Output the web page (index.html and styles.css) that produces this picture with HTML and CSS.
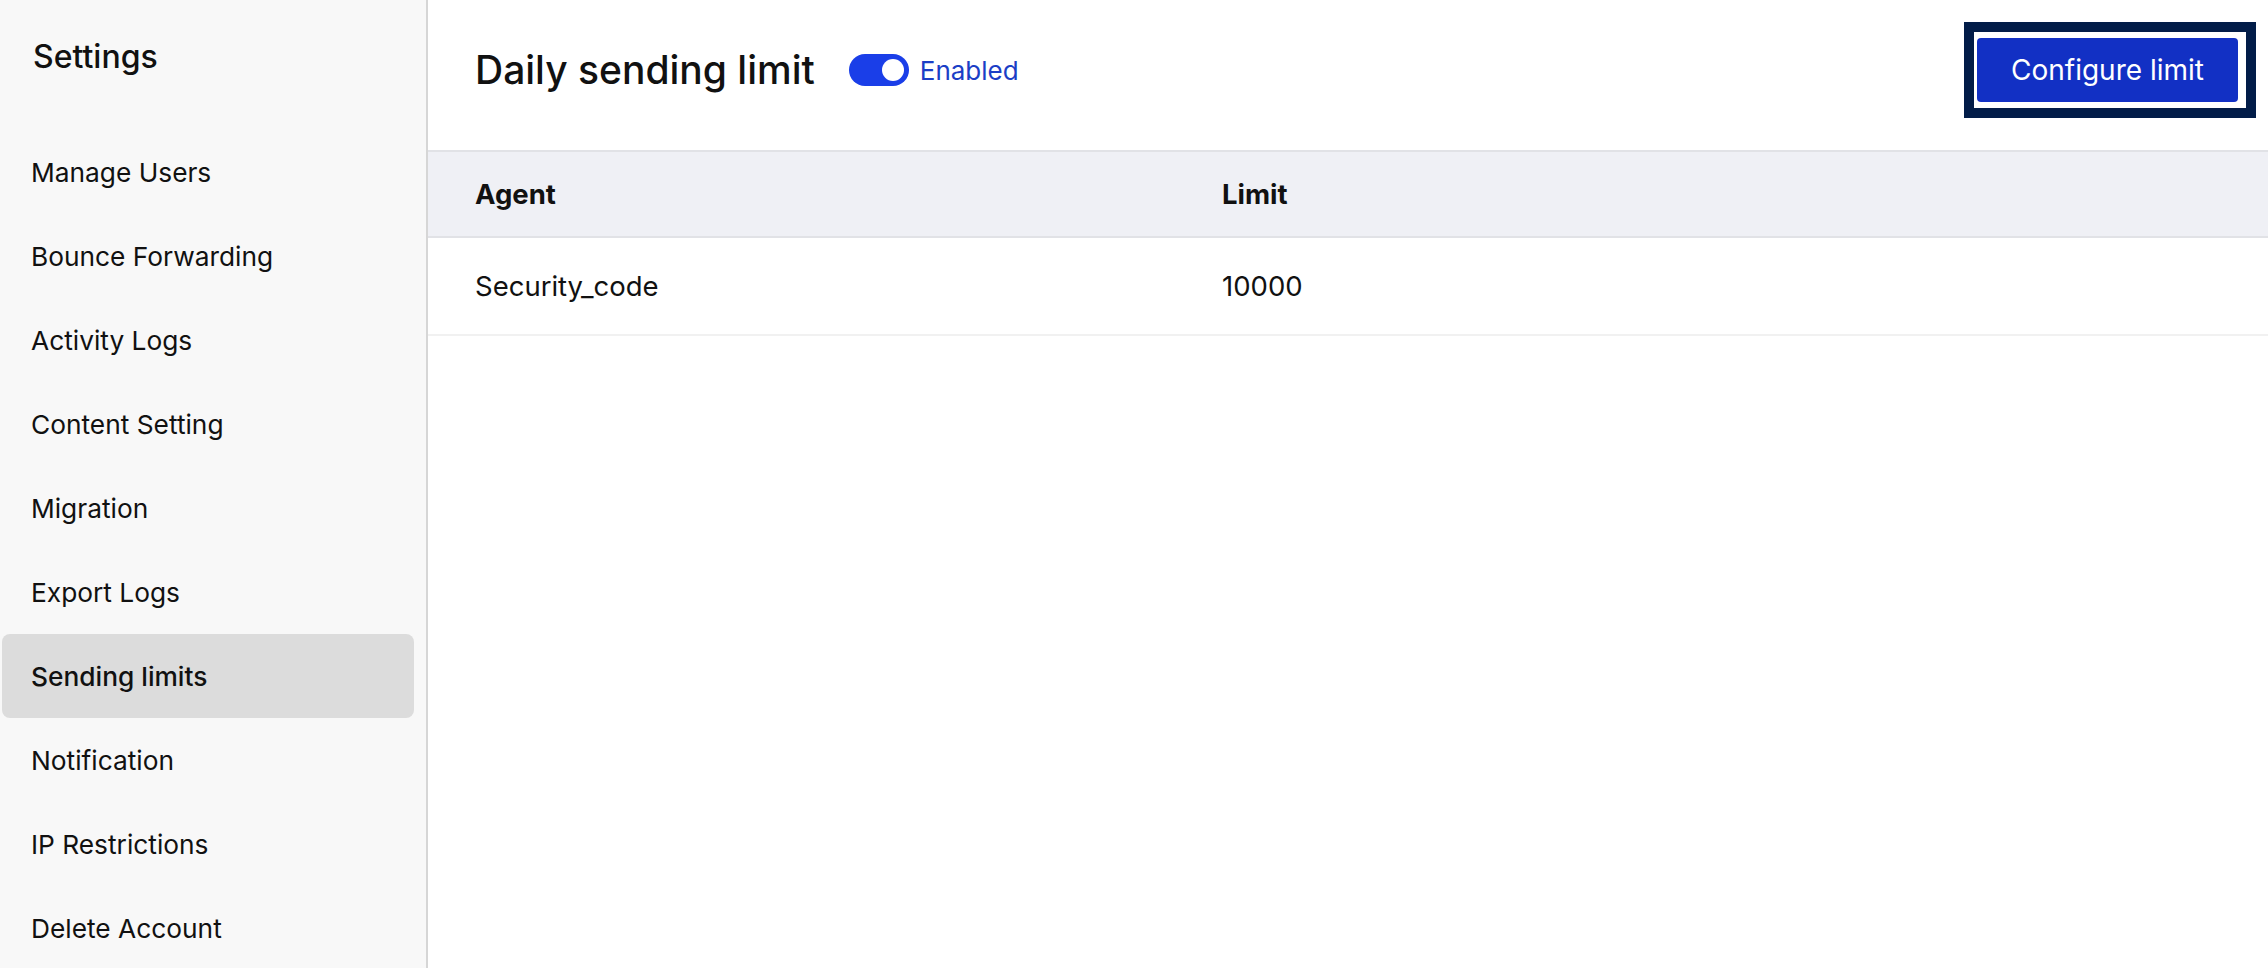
FILE: index.html
```html
<!DOCTYPE html>
<html lang="en">
<head>
<meta charset="utf-8">
<title>Sending limits</title>
<link rel="stylesheet" href="styles.css">
</head>
<body>
<div class="app">
  <aside class="sidebar">
    <div class="sidebar-title">Settings</div>
    <nav class="nav">
      <div class="nav-item">Manage Users</div>
      <div class="nav-item">Bounce Forwarding</div>
      <div class="nav-item">Activity Logs</div>
      <div class="nav-item">Content Setting</div>
      <div class="nav-item">Migration</div>
      <div class="nav-item">Export Logs</div>
      <div class="nav-item active">Sending limits</div>
      <div class="nav-item">Notification</div>
      <div class="nav-item">IP Restrictions</div>
      <div class="nav-item">Delete Account</div>
    </nav>
  </aside>
  <main class="main">
    <header class="header">
      <div class="header-left">
        <h1 class="title">Daily sending limit</h1>
        <span class="toggle"><span class="knob"></span></span>
        <span class="toggle-label">Enabled</span>
      </div>
      <span class="focus-ring"><button class="btn">Configure limit</button></span>
    </header>
    <div class="table">
      <div class="row head">
        <div class="cell">Agent</div>
        <div class="cell">Limit</div>
      </div>
      <div class="row body-row">
        <div class="cell">Security_code</div>
        <div class="cell">10000</div>
      </div>
    </div>
  </main>
</div>
</body>
</html>
```
FILE: styles.css
```css
* { box-sizing: border-box; }
html, body { margin: 0; padding: 0; }
body {
  font-family: Inter, "Noto Sans", "Liberation Sans", sans-serif;
  color: #111;
  background: #fff;
}
.app {
  display: flex;
  height: 968px;
  overflow: hidden;
}
.sidebar {
  width: 428px;
  flex: none;
  background: #f8f8f8;
  border-right: 2px solid #d6d6d6;
}
.sidebar-title {
  padding: 36px 0 0 33px;
  height: 130px;
  font-size: 32px;
  line-height: 42px;
  font-weight: 500;
  color: #111;
}
.nav {
  display: flex;
  flex-direction: column;
}
.nav-item {
  height: 84px;
  margin-left: 2px;
  width: 412px;
  padding-left: 29px;
  display: flex;
  align-items: center;
  font-size: 26.3px;
  color: #111;
  border-radius: 8px;
}
.nav-item.active {
  background: #dcdcdc;
  font-weight: 500;
}
.main {
  flex: 1;
  display: flex;
  flex-direction: column;
}
.header {
  display: flex;
  align-items: center;
  justify-content: space-between;
  padding: 22px 12px 32px 47px;
}
.header-left {
  display: flex;
  align-items: center;
}
.title {
  margin: 0;
  font-size: 39px;
  font-weight: 500;
  line-height: 48px;
  color: #111;
}
.toggle {
  margin-left: 34px;
  width: 60px;
  height: 32px;
  border-radius: 16px;
  background: #1a3ee8;
  position: relative;
  display: inline-block;
}
.knob {
  position: absolute;
  right: 5px;
  top: 5px;
  width: 22px;
  height: 22px;
  border-radius: 50%;
  background: #fff;
}
.toggle-label {
  margin-left: 11px;
  font-size: 26px;
  color: #1b3ec6;
}
.focus-ring {
  display: inline-flex;
  border: 10px solid #021c48;
  padding: 6px 8px 6px 3px;
  background: #fff;
}
.btn {
  width: 261px;
  height: 64px;
  border: none;
  border-radius: 4px;
  background: #1230c4;
  color: #fff;
  font-family: inherit;
  font-size: 28px;
  font-weight: 400;
  padding: 0;
}
.table {
  display: flex;
  flex-direction: column;
}
.row {
  display: grid;
  grid-template-columns: 747px 1fr;
  align-items: center;
}
.row.head {
  height: 88px;
  background: #eff0f5;
  border-top: 2px solid #e1e2e6;
  border-bottom: 2px solid #e1e2e6;
  font-weight: 700;
}
.row.body-row {
  height: 98px;
  border-bottom: 2px solid #f1f1f1;
}
.cell {
  padding-left: 47px;
  font-size: 27.5px;
}
```
